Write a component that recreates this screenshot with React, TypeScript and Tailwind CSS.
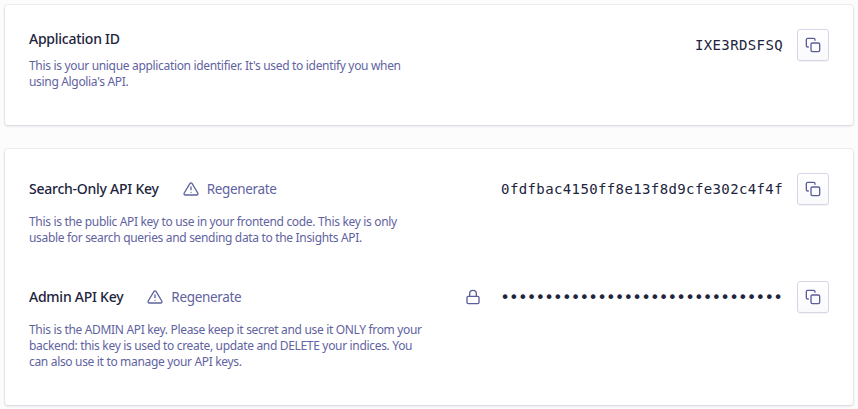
import type { ReactNode } from 'react';

function CopyButton() {
  return (
    <button
      aria-label="Copy"
      className="ml-3.5 flex size-8 shrink-0 items-center justify-center rounded-[3px] border border-[#d6d6e7] bg-linear-to-b from-white to-[#fafafd] text-[#5a5e9a] shadow-[0_1px_0_rgba(35,38,59,0.05)]"
    >
      <svg width="16" height="16" viewBox="0 0 24 24" fill="none" stroke="currentColor" strokeWidth="2" strokeLinecap="round" strokeLinejoin="round">
        <rect x="9" y="9" width="13" height="13" rx="2" />
        <path d="M5 15H4a2 2 0 0 1-2-2V4a2 2 0 0 1 2-2h9a2 2 0 0 1 2 2v1" />
      </svg>
    </button>
  );
}

function Regenerate() {
  return (
    <button className="ml-6 flex items-center gap-2 text-[13.5px] leading-5 tracking-[-0.34px] text-[#5f639f]">
      <svg width="16" height="16" viewBox="0 0 24 24" fill="none" stroke="currentColor" strokeWidth="2" strokeLinecap="round" strokeLinejoin="round">
        <path d="M10.29 3.86 1.82 18a2 2 0 0 0 1.71 3h16.94a2 2 0 0 0 1.71-3L13.71 3.86a2 2 0 0 0-3.42 0z" />
        <path d="M12 9v4M12 17h.01" />
      </svg>
      Regenerate
    </button>
  );
}

function LockIcon() {
  return (
    <svg className="mr-5 text-[#5a5e9a]" width="16" height="16" viewBox="0 0 24 24" fill="none" stroke="currentColor" strokeWidth="2" strokeLinecap="round" strokeLinejoin="round">
      <rect x="3" y="11" width="18" height="11" rx="2" />
      <path d="M7 11V7a5 5 0 0 1 10 0v4" />
    </svg>
  );
}

function Title({ children }: { children: ReactNode }) {
  return <h2 className="text-[14px] leading-5 font-medium tracking-[-0.25px] whitespace-nowrap text-[#21243d]">{children}</h2>;
}

function Description({ lines }: { lines: string[] }) {
  return (
    <p className="text-[12px] leading-4 tracking-[-0.325px] whitespace-nowrap text-[#5f639f]">
      {lines.map((line) => (
        <span key={line} className="block">{line}</span>
      ))}
    </p>
  );
}

function KeyValue({ children }: { children: ReactNode }) {
  return (
    <code className="font-['DejaVu_Sans_Mono',monospace] text-[14px] leading-5 tracking-[0.38px] text-[#21243d]">
      {children}
    </code>
  );
}

function MaskedValue({ length }: { length: number }) {
  return (
    <code className="-ml-px pt-0.5 pr-px font-['DejaVu_Sans_Mono',monospace] text-[16px] leading-5 tracking-[-0.83px] text-[#21243d]">
      {'•'.repeat(length)}
    </code>
  );
}

const card = 'rounded-[3px] bg-white p-6 shadow-[0_0_0_1px_rgba(35,38,59,0.05),0_1px_3px_0_rgba(35,38,59,0.15)]';

export default function App() {
  return (
    <main className="flex h-[409px] w-[858px] flex-col gap-6 overflow-hidden bg-[#fcfcfd] p-[5px] font-['Noto_Sans',sans-serif]">
      <section className={`${card} flex h-[120px] w-[848px] shrink-0 items-start justify-between`}>
        <div className="flex flex-col gap-[9px]">
          <Title>Application ID</Title>
          <Description lines={["This is your unique application identifier. It's used to identify you when", "using Algolia's API."]} />
        </div>
        <div className="flex h-8 items-center">
          <KeyValue>IXE3RDSFSQ</KeyValue>
          <CopyButton />
        </div>
      </section>

      <section className={`${card} flex h-[256px] w-[848px] shrink-0 flex-col gap-[35px]`}>
        <div className="flex flex-col gap-[9px]">
          <div className="flex h-8 items-center justify-between">
            <div className="flex items-center">
              <Title>Search-Only API Key</Title>
              <Regenerate />
            </div>
            <div className="flex items-center">
              <KeyValue>0fdfbac4150ff8e13f8d9cfe302c4f4f</KeyValue>
              <CopyButton />
            </div>
          </div>
          <Description lines={['This is the public API key to use in your frontend code. This key is only', 'usable for search queries and sending data to the Insights API.']} />
        </div>
        <div className="flex flex-col gap-[9px]">
          <div className="flex h-8 items-center justify-between">
            <div className="flex items-center">
              <Title>Admin API Key</Title>
              <Regenerate />
            </div>
            <div className="flex items-center">
              <LockIcon />
              <MaskedValue length={32} />
              <CopyButton />
            </div>
          </div>
          <Description lines={['This is the ADMIN API key. Please keep it secret and use it ONLY from your', 'backend: this key is used to create, update and DELETE your indices. You', 'can also use it to manage your API keys.']} />
        </div>
      </section>
    </main>
  );
}
